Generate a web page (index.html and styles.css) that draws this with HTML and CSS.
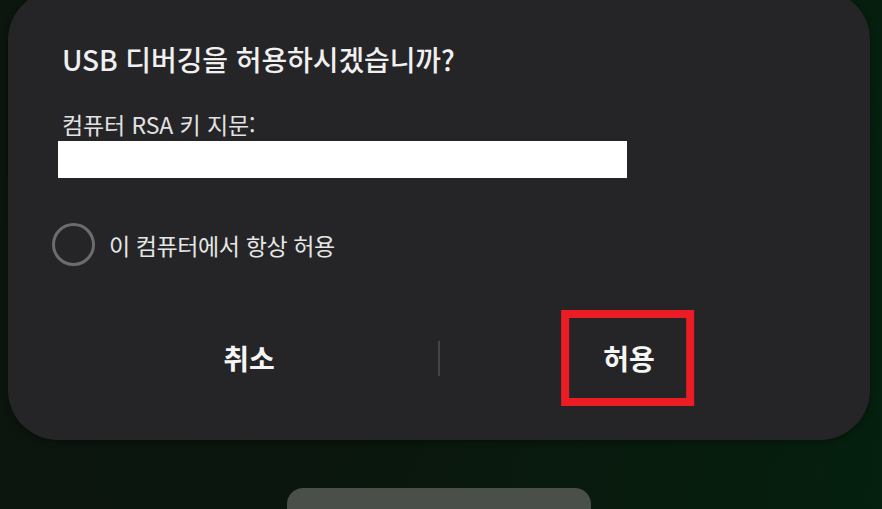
FILE: index.html
```html
<!DOCTYPE html>
<html lang="ko">
<head>
<meta charset="utf-8">
<link rel="stylesheet" href="styles.css">
</head>
<body>
<div class="screen">
  <div class="dialog">
    <h1 class="title">USB 디버깅을 허용하시겠습니까?</h1>
    <p class="label">컴퓨터 RSA 키 지문:</p>
    <div class="fingerprint"></div>
    <label class="option">
      <span class="radio"></span>
      <span class="option-text">이 컴퓨터에서 항상 허용</span>
    </label>
    <div class="actions">
      <button class="btn">취소</button>
      <span class="divider"></span>
      <button class="btn btn-allow">허용<span class="highlight"></span></button>
    </div>
  </div>
  <div class="pill-row"><div class="pill"></div></div>
</div>
</body>
</html>
```
FILE: styles.css
```css
* { box-sizing: border-box; }
html, body {
  margin: 0;
  padding: 0;
  width: 882px;
  height: 509px;
  overflow: hidden;
}
body {
  font-family: "Noto Sans CJK KR", "Noto Sans", sans-serif;
  background: linear-gradient(100deg, #0c150e 0%, #0a170d 50%, #05200e 100%);
}
.screen {
  display: flex;
  flex-direction: column;
  height: 509px;
}
.dialog {
  flex: none;
  margin: -10px 0 0 8px;
  width: 862px;
  height: 450px;
  background: #252527;
  border-radius: 50px;
  box-shadow: 0 2px 6px rgba(0,0,0,0.35);
  padding: 49px 54px 0 54px;
  display: flex;
  flex-direction: column;
  color: #eeeeee;
}
.title {
  margin: 0;
  font-size: 28px;
  font-weight: 500;
  line-height: 40px;
  letter-spacing: -0.1px;
  color: #f0f0f0;
}
.label {
  margin: 30px 0 0 0;
  font-size: 23px;
  font-weight: 400;
  line-height: 30px;
  letter-spacing: -0.1px;
  color: #e2e2e2;
}
.fingerprint {
  margin: 2px 0 0 -4px;
  width: 569px;
  height: 37px;
  background: #ffffff;
  flex: none;
}
.option {
  margin: 45px 0 0 -10px;
  display: flex;
  align-items: center;
  gap: 14px;
  height: 43px;
}
.radio {
  width: 43px;
  height: 43px;
  border: 3px solid #6c6c6c;
  border-radius: 50%;
  flex: none;
}
.option-text {
  font-size: 23px;
  line-height: 30px;
  letter-spacing: -0.4px;
  color: #e6e6e6;
}
.actions {
  margin: 70px -2px 0 -2px;
  display: flex;
  align-items: center;
  height: 44px;
  flex: none;
}
.btn {
  flex: 1;
  background: none;
  border: 0;
  padding: 0;
  font-family: inherit;
  font-size: 28px;
  font-weight: 700;
  color: #f5f5f5;
  line-height: 40px;
  position: relative;
}
.divider {
  width: 2px;
  height: 35px;
  background: #444446;
  flex: none;
}
.highlight {
  position: absolute;
  left: 50%;
  top: 50%;
  width: 133px;
  height: 96px;
  transform: translate(-51%, -50%);
  border: 8px solid #ec1c24;
}
.pill-row {
  display: flex;
  justify-content: center;
  margin-top: 48px;
  padding-right: 4px;
}
.pill {
  width: 304px;
  height: 40px;
  background: #4a5049;
  border-radius: 16px 16px 0 0;
}
```
